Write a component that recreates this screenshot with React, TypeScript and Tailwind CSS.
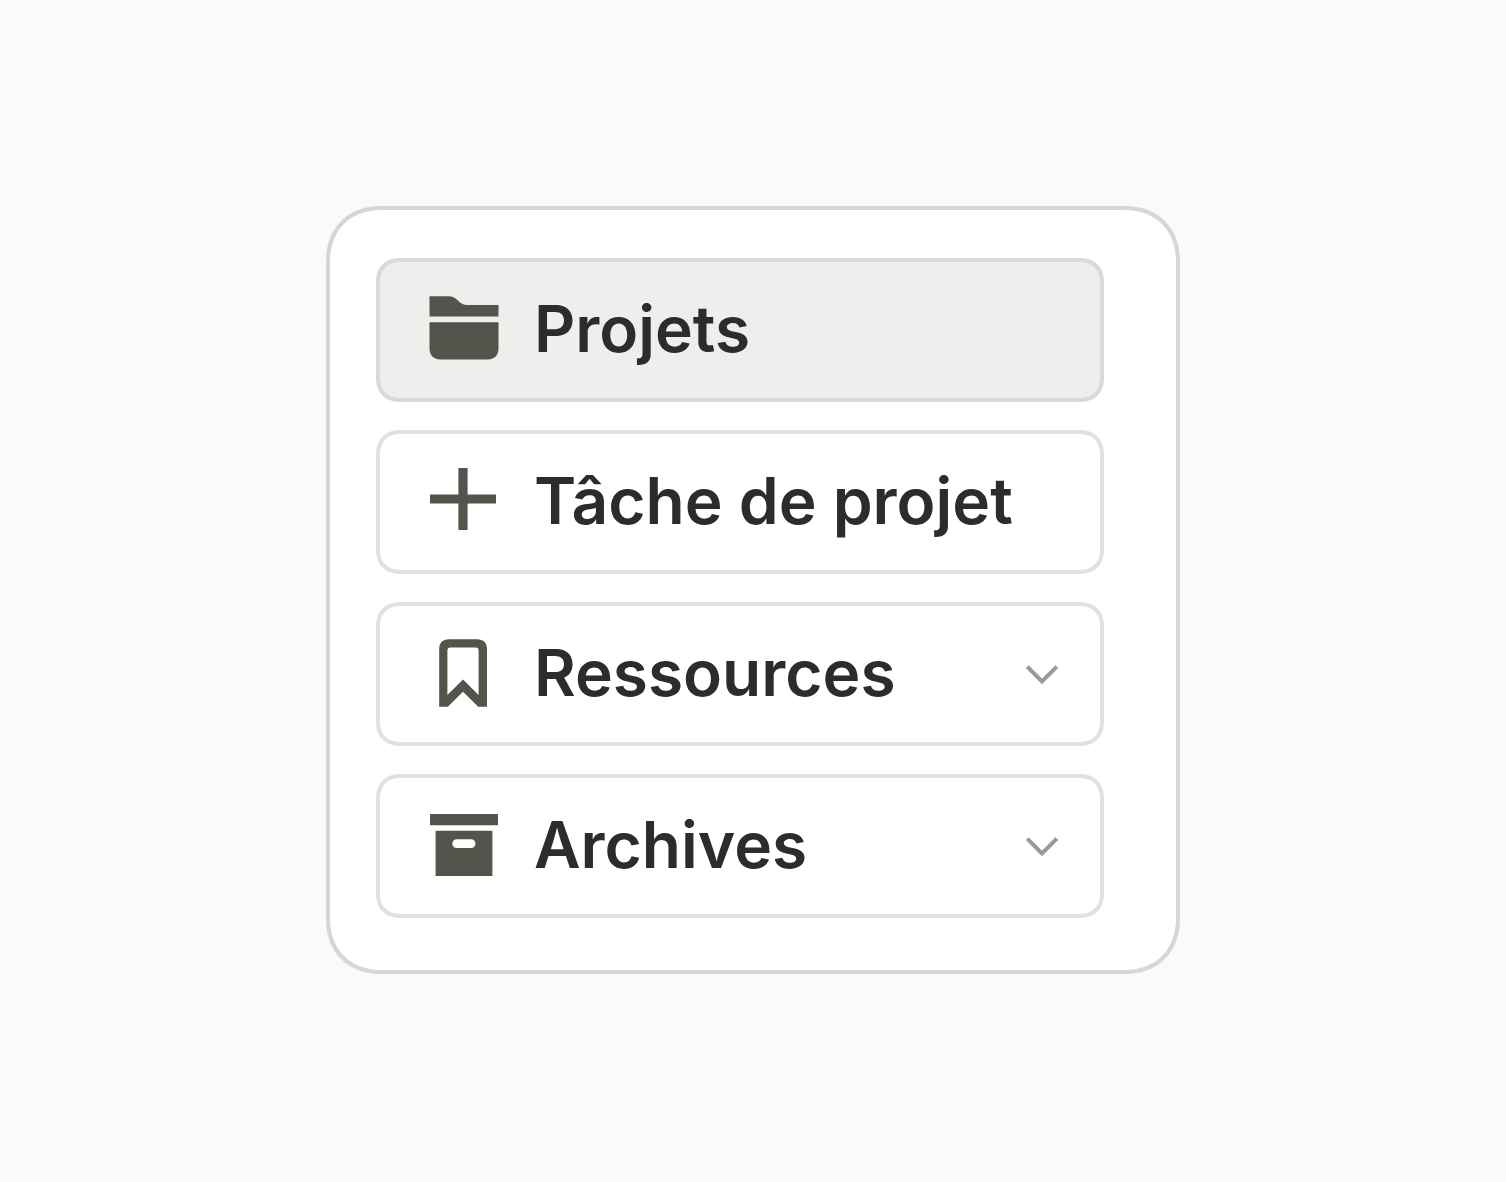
import type { ReactNode } from "react";
import clsx from "clsx";

interface NavItem {
  label: string;
  icon: ReactNode;
  active?: boolean;
  expandable?: boolean;
}

function Icon({ children }: { children: ReactNode }) {
  return (
    <svg viewBox="0 0 72 72" className="size-[72px] shrink-0 fill-[#54534c]" aria-hidden="true">
      {children}
    </svg>
  );
}

function FolderIcon() {
  return (
    <Icon>
      <path d="M1.5 2.2H20.5C24.5 2.2 27 3.6 29.6 6.2C32.6 9.3 35 10.9 39.5 10.9H70.5V22.5H1.5Z" />
      <path d="M1.5 28.2H70.5V54.5C70.5 61 66.4 65.4 60 65.4H12C5.6 65.4 1.5 61 1.5 54.5Z" />
    </Icon>
  );
}

function PlusIcon() {
  return (
    <Icon>
      <path d="M30.4 2H39.6V28.5H68V37.4H39.6V64H30.4V37.4H2V28.5H30.4Z" />
    </Icon>
  );
}

function BookmarkIcon() {
  return (
    <Icon>
      <path
        fillRule="evenodd"
        d="M21 1.2H49C55.5 1.2 59 4.8 59 11V68.8H50.2L35 53.8L19.8 68.8H11.2V11C11.2 4.8 14.7 1.2 21 1.2ZM22.4 9.4C20.4 9.4 19.4 10.4 19.4 12.4V57L35 41.4L50.6 57V12.4C50.6 10.4 49.6 9.4 47.6 9.4Z"
      />
    </Icon>
  );
}

function ArchiveIcon() {
  return (
    <Icon>
      <path d="M2 4H70V15.3H2Z" />
      <path
        fillRule="evenodd"
        d="M7.6 20.8H64.4V66H7.6ZM28.7 29.2A4.4 4.4 0 0 0 28.7 38H43.1A4.4 4.4 0 0 0 43.1 29.2Z"
      />
    </Icon>
  );
}

function Chevron() {
  return (
    <svg viewBox="0 0 44 44" className="size-11 shrink-0 fill-none stroke-[#999999]" strokeWidth="4" aria-hidden="true">
      <path d="M7.2 14.6L22 29.4L36.8 14.6" />
    </svg>
  );
}

const items: NavItem[] = [
  { label: "Projets", icon: <FolderIcon />, active: true },
  { label: "Tâche de projet", icon: <PlusIcon /> },
  { label: "Ressources", icon: <BookmarkIcon />, expandable: true },
  { label: "Archives", icon: <ArchiveIcon />, expandable: true },
];

export default function App() {
  return (
    <main className="flex min-h-screen items-center justify-center bg-[#fafafa] pb-0.5 font-['Inter',sans-serif]">
      <nav className="w-full max-w-[854px] rounded-[56px] border-4 border-[#d6d6d6] bg-white pt-12 pr-[72px] pb-[52px] pl-[46px] [corner-shape:superellipse(1.15)]">
        <ul className="flex flex-col gap-7">
          {items.map((item) => (
            <li key={item.label}>
              <button
                type="button"
                aria-current={item.active ? "page" : undefined}
                aria-expanded={item.expandable ? false : undefined}
                className={clsx(
                  "flex w-full items-center gap-[34px] rounded-3xl border-4 py-8 pr-9 pl-12 text-left [corner-shape:superellipse(1.15)]",
                  item.active ? "border-[#d9d9d6] bg-[#eeeeec]" : "border-[#e1e1e1] bg-white",
                )}
              >
                {item.icon}
                <span className="flex-1 pb-0.5 text-[64px] leading-[70px] font-semibold text-[#2c2c2c]">{item.label}</span>
                {item.expandable && <Chevron />}
              </button>
            </li>
          ))}
        </ul>
      </nav>
    </main>
  );
}
